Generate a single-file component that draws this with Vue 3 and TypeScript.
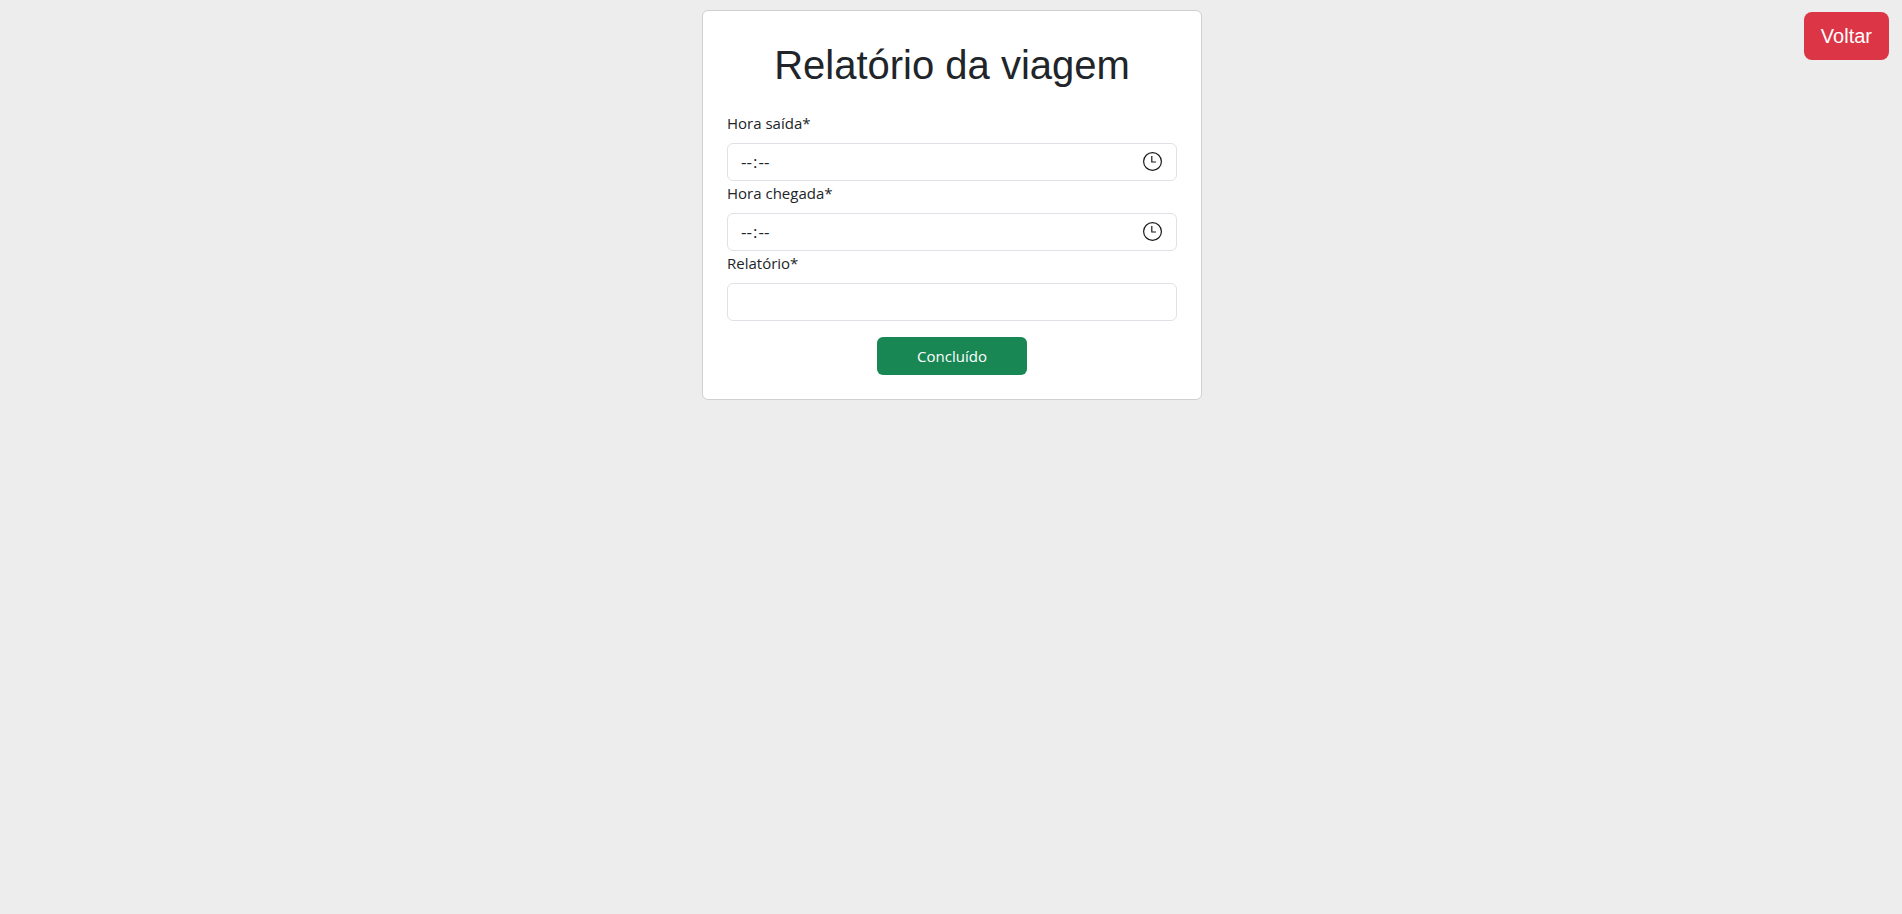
<script setup lang="ts">
import { reactive } from 'vue'

const report = reactive({ departure: '', arrival: '', notes: '' })
</script>

<template>
  <div class="page">
    <form class="card" @submit.prevent>
      <h1 class="title">Relatório da viagem</h1>

      <label class="label" for="departure">Hora saída*</label>
      <div class="field">
        <input id="departure" v-model="report.departure" class="control" type="time" />
        <svg class="clock" viewBox="0 0 19 19" aria-hidden="true">
          <circle cx="9.5" cy="9.5" r="8.9" />
          <path d="M8.8 4v6H13" />
        </svg>
      </div>

      <label class="label" for="arrival">Hora chegada*</label>
      <div class="field">
        <input id="arrival" v-model="report.arrival" class="control" type="time" />
        <svg class="clock" viewBox="0 0 19 19" aria-hidden="true">
          <circle cx="9.5" cy="9.5" r="8.9" />
          <path d="M8.8 4v6H13" />
        </svg>
      </div>

      <label class="label" for="notes">Relatório*</label>
      <input id="notes" v-model="report.notes" class="control" type="text" />

      <button class="submit" type="submit">Concluído</button>
    </form>

    <button class="back" type="button">Voltar</button>
  </div>
</template>

<style>
body {
  background: #ededed;
}
</style>

<style scoped>
.page,
.page * {
  box-sizing: border-box;
}

.page {
  padding: 10px 10px 10px 12px;
  color: #212529;
  font-family: "Segoe UI", "Open Sans", sans-serif;
  font-size: 15px;
  line-height: 24px;
}

.card {
  display: flex;
  flex-direction: column;
  max-width: 500px;
  margin: 0 auto;
  padding: 24px;
  border: 1px solid #d0d0d1;
  border-radius: 6px;
  background: #fff;
}

.title {
  margin: 0 0 16px;
  font-family: Arial, "Liberation Sans", sans-serif;
  font-size: 40px;
  font-weight: 400;
  line-height: 60px;
  text-align: center;
}

.label {
  align-self: flex-start;
  margin-bottom: 8px;
}

.field {
  position: relative;
}

.control {
  display: block;
  width: 100%;
  height: 38px;
  padding: 6px 12px;
  border: 1px solid #dee2e6;
  border-radius: 6px;
  background: #fff;
  color: inherit;
  font: inherit;
  font-size: 17px;
}

.control::-webkit-datetime-edit-ampm-field {
  display: none;
}

.control::-webkit-calendar-picker-indicator {
  width: 20px;
  height: 20px;
  padding: 0;
  opacity: 0;
}

.clock {
  position: absolute;
  top: 9px;
  right: 15px;
  width: 19px;
  height: 19px;
  fill: none;
  stroke: #1b1b1b;
  stroke-width: 1.2;
  pointer-events: none;
}

.submit,
.back {
  border: 0;
  color: #fff;
  cursor: pointer;
}

.submit {
  align-self: center;
  width: 150px;
  height: 38px;
  margin-top: 16px;
  border-radius: 6px;
  background: #198754;
  font: inherit;
}

.back {
  position: fixed;
  top: 12px;
  right: 13px;
  padding: 9px 17px;
  border-radius: 8px;
  background: #dc3545;
  font-family: Arial, "Liberation Sans", sans-serif;
  font-size: 20px;
  line-height: 30px;
}
</style>
